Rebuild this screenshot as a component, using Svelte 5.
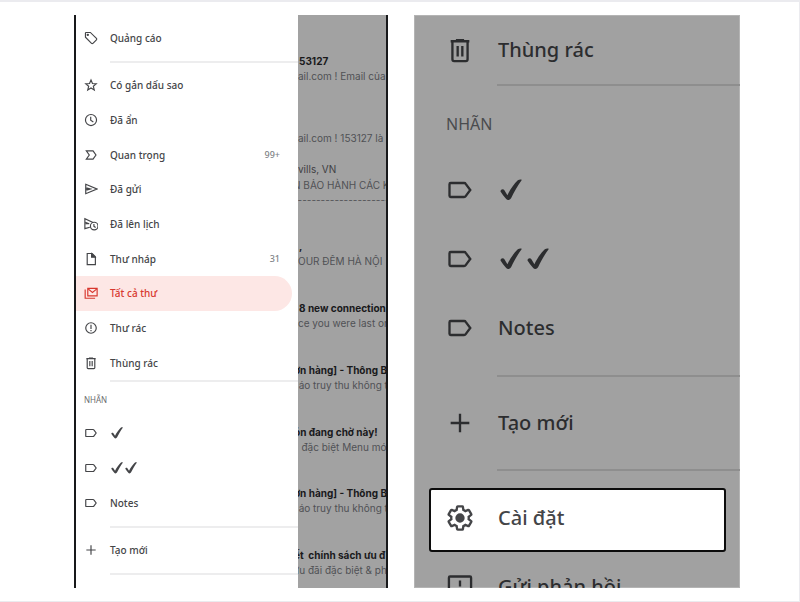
<script lang="ts">
	type Item = { icon: string; name: string; count?: string; active?: boolean; checks?: number };
	type Mail = { sender?: string; subject?: string; snippet?: string; unread?: boolean; cut?: boolean };

	const folders: Item[] = [
		{ icon: 'star', name: 'Có gắn dấu sao' },
		{ icon: 'clock', name: 'Đã ẩn' },
		{ icon: 'important', name: 'Quan trọng', count: '99+' },
		{ icon: 'send', name: 'Đã gửi' },
		{ icon: 'scheduled', name: 'Đã lên lịch' },
		{ icon: 'draft', name: 'Thư nháp', count: '31' },
		{ icon: 'allmail', name: 'Tất cả thư', active: true },
		{ icon: 'spam', name: 'Thư rác' },
		{ icon: 'trash', name: 'Thùng rác' }
	];

	const labels: Item[] = [
		{ icon: 'label', name: 'Một dấu kiểm', checks: 1 },
		{ icon: 'label', name: 'Hai dấu kiểm', checks: 2 },
		{ icon: 'label', name: 'Notes' }
	];

	// "cut" mails slide a few pixels under the drawer
	const mails: Mail[] = [
		{ subject: '53127', snippet: 'ail.com ! Email của', unread: true },
		{ snippet: 'ail.com ! 153127 là' },
		{ sender: 'vills, VN', subject: 'N BẢO HÀNH CÁC K', snippet: '-'.repeat(21), cut: true },
		{ subject: ',', snippet: 'OUR ĐÊM HÀ NỘI', unread: true },
		{ subject: '8 new connection', snippet: 'ce you were last on', unread: true },
		{ subject: 'ơn hàng] - Thông B', snippet: '  áo truy thu không t', unread: true, cut: true },
		{ subject: 'ón đang chờ này!', snippet: '   đặc biệt Menu mó', unread: true, cut: true },
		{ subject: 'ơn hàng] - Thông B', snippet: '  áo truy thu không t', unread: true, cut: true },
		{ subject: 'ết  chính sách ưu đ', snippet: 'ưu đãi đặc biệt & ph', unread: true, cut: true }
	];
</script>

{#snippet icon(name: string)}
	<svg class="icon" viewBox="0 0 24 24" aria-hidden="true">
		{#if name === 'tag'}
			<path d="M2.500 3.500v7.200l10.400 10.400c.7.7 1.700.7 2.400 0l6-6c.7-.7.7-1.700 0-2.400L10.900 2.500H3.500c-.6 0-1 .4-1 1z" />
			<circle class="solid" cx="6.500" cy="6.500" r="1" />
		{:else if name === 'star'}
			<path d="M12 3.500l2.500 6 6.500.5-5 4.200 1.600 6.300-5.600-3.400-5.600 3.400L8 14.200 3 10l6.500-.5z" />
		{:else if name === 'clock'}
			<circle cx="12" cy="12" r="9.500" />
			<path d="M11.500 6.500v6l4.500 3" />
		{:else if name === 'important'}
			<path d="M4 5h11.500l5 7-5 7H4l5-7z" />
		{:else if name === 'send'}
			<path d="M3 4l19 8-19 8z" />
			<path d="M3 12h10M4 10l7 2-7 2" />
		{:else if name === 'scheduled'}
			<path d="M10 17.500L1.500 20V3l14 6.500" />
			<path d="M2 11.500h7M2 9l7 2.500" />
			<circle cx="17.500" cy="15.500" r="6.500" />
			<path d="M17 12v4l3 2" />
		{:else if name === 'draft'}
			<path d="M5.500 2.500h8.500l5.500 5.500v13.500h-14z" />
			<path class="solid" d="M13 3v6h6z" />
		{:else if name === 'allmail'}
			<path d="M6.500 4h16v13h-16z" />
			<path d="M7 5l7.500 6L22 5M2 6v15h17" />
		{:else if name === 'spam'}
			<circle cx="12" cy="12" r="9" />
			<path d="M12 6.500v7M12 15.500v2" />
		{:else if name === 'trash'}
			<path d="M5.500 5v15c0 .8.600 1.500 1.500 1.500h10c.9 0 1.500-.7 1.500-1.500V5" />
			<path d="M4 4.500h16M8.500 3.500h7M10 8.500v9M14 8.500v9" />
		{:else if name === 'label'}
			<path d="M5 6h10.500c.6 0 1.100.2 1.400.7L20.800 12l-3.900 5.300c-.3.500-.8.700-1.400.7H4c-.6 0-1-.4-1-1V7c0-.6.400-1 1-1z" />
		{:else if name === 'plus'}
			<path d="M12 4v16M4 12h16" />
		{:else if name === 'settings'}
			<path d="M19.430 12.980c.04-.32.07-.64.07-.98 0-.34-.03-.66-.07-.98l2.110-1.650c.19-.15.24-.42.12-.64l-2-3.460c-.09-.16-.26-.25-.44-.25-.06 0-.12.01-.17.03l-2.490 1c-.52-.4-1.080-.73-1.690-.98l-.38-2.650C14.460 2.180 14.250 2 14 2h-4c-.25 0-.46.18-.49.42l-.38 2.650c-.61.25-1.170.59-1.690.98l-2.490-1c-.06-.02-.12-.03-.18-.03-.17 0-.34.09-.43.25l-2 3.460c-.13.22-.07.49.12.64l2.110 1.650c-.04.32-.07.65-.07.98 0 .33.03.66.07.98l-2.110 1.650c-.19.15-.24.42-.12.64l2 3.460c.09.16.26.25.44.25.06 0 .12-.01.17-.03l2.490-1c.52.4 1.080.73 1.690.98l.38 2.650c.03.24.24.42.49.42h4c.25 0 .46-.18.49-.42l.38-2.650c.61-.25 1.170-.59 1.690-.98l2.490 1c.06.02.12.03.18.03.17 0 .34-.09.43-.25l2-3.460c.12-.22.07-.49-.12-.64z" />
			<circle class="solid" cx="12" cy="12" r="3" />
		{:else if name === 'feedback'}
			<path d="M2.500 22V4c0-.6.400-1 1-1h17c.6 0 1 .4 1 1v14H6.500z" />
			<path d="M12 6.500v5M12 13.500v2" />
		{/if}
	</svg>
{/snippet}

{#snippet row(item: Item)}
	<a class="row" class:active={item.active} href="#{item.icon}" aria-label={item.name}>
		{@render icon(item.icon)}
		{#if item.checks}
			<span class="checks">
				{#each { length: item.checks } as _}
					<svg class="check" viewBox="0 0 22 22" aria-hidden="true">
						<path d="M.5 12.500C.4 10.500 3.300 9.500 4.400 11.300l3 4.900C10 10.500 14 5 17.800 1.300 19.200.3 22.200.3 21.600 1.200 17.600 6.500 14 13.300 11.200 19c-1.200 2.300-3.800 2.600-5.200.8C4 17.500 2 15 .5 12.500z" />
					</svg>
				{/each}
			</span>
		{:else}
			<span class="name">{item.name}</span>
		{/if}
		{#if item.count}<span class="count">{item.count}</span>{/if}
	</a>
{/snippet}

<main class="frame">
	<section class="phone">
		<nav class="menu">
			{@render row({ icon: 'tag', name: 'Quảng cáo' })}
			<hr />
			<ul class="folders">
				{#each folders as item}
					<li>{@render row(item)}</li>
				{/each}
			</ul>
			<hr />
			<h2>NHÃN</h2>
			<ul class="labels">
				{#each labels as item}
					<li>{@render row(item)}</li>
				{/each}
			</ul>
			<hr />
			{@render row({ icon: 'plus', name: 'Tạo mới' })}
			<hr />
		</nav>
		<div class="mails">
			{#each mails as mail}
				<article class:cut={mail.cut} class:unread={mail.unread}>
					<p class="sender">{mail.sender}</p>
					<p class="subject">{mail.subject}</p>
					<p class="snippet">{mail.snippet}</p>
				</article>
			{/each}
		</div>
	</section>

	<nav class="menu large">
		{@render row({ icon: 'trash', name: 'Thùng rác' })}
		<hr />
		<h2>NHÃN</h2>
		<ul class="labels">
			{#each labels as item}
				<li>{@render row(item)}</li>
			{/each}
		</ul>
		<hr />
		{@render row({ icon: 'plus', name: 'Tạo mới' })}
		<hr />
		<div class="highlight">
			{@render row({ icon: 'settings', name: 'Cài đặt' })}
		</div>
		<div class="last">
			{@render row({ icon: 'feedback', name: 'Gửi phản hồi' })}
		</div>
	</nav>
</main>

<style>
	:global(body) {
		margin: 0;
		background: #fff;
	}
	.frame {
		display: grid;
		grid-template-columns: minmax(0, 314fr) minmax(0, 326fr);
		gap: 26px;
		padding: 13px 59px 13px 74px;
		border: solid #ebebef;
		border-width: 2px 1px 1px 0;
		font-family: 'Noto Sans', 'Open Sans', sans-serif;
	}
	.phone {
		display: grid;
		grid-template-columns: minmax(0, 222fr) minmax(0, 88fr);
		border: solid #18191b;
		border-width: 0 2px;
	}

	/* menu, shared by the drawer and the enlarged view */
	.menu {
		display: flex;
		flex-direction: column;
		padding: 6px 0 8px;
		color: #444548;
		font-size: 10px;
	}
	ul {
		display: grid;
		grid-auto-rows: 1fr;
		margin: 0;
		padding: 0;
		list-style: none;
	}
	li {
		display: grid;
	}
	.row {
		display: flex;
		align-items: center;
		gap: 12px;
		min-height: 34px;
		padding: 0 18px 0 8px;
		box-sizing: border-box;
		color: inherit;
		font-weight: 500;
		line-height: 14px;
		text-decoration: none;
		white-space: nowrap;
	}
	.row.active {
		margin-right: 6px;
		border-radius: 0 18px 18px 0;
		background: #fde7e5;
		color: #d8382f;
	}
	.count {
		margin-left: auto;
		color: #808387;
		font-size: 9px;
	}
	.icon {
		flex: none;
		width: 14px;
		height: 14px;
		fill: none;
		stroke: currentColor;
		stroke-width: 2;
	}
	.solid {
		fill: currentColor;
	}
	.checks {
		display: flex;
		gap: 2px;
		padding-left: 1px;
	}
	.check {
		width: 12px;
		height: 12px;
		fill: currentColor;
	}
	hr {
		width: calc(100% - 34px);
		height: 2px;
		margin: 6px 0 5px 34px;
		border: 0;
		background: #ededee;
	}
	.folders {
		min-height: 312px;
	}
	.folders + hr {
		margin: 0 0 0 34px;
	}
	.labels {
		min-height: 104px;
	}
	h2 {
		margin: 0;
		padding: 12px 0 10px 8px;
		color: #6a6b6e;
		font-size: 8px;
		font-weight: 400;
		line-height: 12px;
	}

	/* inbox behind the drawer */
	.mails {
		display: flex;
		flex-direction: column;
		justify-content: space-between;
		padding: 22px 0 10px;
		overflow: hidden;
		background: #a2a2a2;
		color: #505155;
		font-family: Inter, 'Noto Sans', sans-serif;
		font-size: 10px;
		line-height: 15px;
	}
	.mails p {
		min-height: 15px;
		margin: 0;
		white-space: pre;
	}
	.mails .sender {
		min-height: 17px;
		color: #3f4043;
		line-height: 17px;
	}
	.unread .subject {
		padding-left: 1px;
		color: #19191b;
		font-weight: 700;
	}
	.cut .subject,
	.cut .snippet {
		text-indent: -5px;
	}

	/* enlarged view */
	.large {
		padding: 0;
		overflow: hidden;
		background: #a1a1a1;
		color: #2c2d2f;
		font-size: 20px;
		box-shadow: inset 0 0 0 1px #b4b4b4;
	}
	.large .row {
		gap: 24px;
		min-height: 69px;
		padding: 0 0 0 32px;
		line-height: 28px;
	}
	.large .icon {
		width: 28px;
		height: 28px;
	}
	.large .checks {
		gap: 5px;
		padding-left: 2px;
	}
	.large .check {
		width: 22px;
		height: 22px;
	}
	.large hr {
		width: calc(100% - 83px);
		margin: 12px 0 11px 83px;
		background: #8e8e8e;
	}
	.large > .row:first-child + hr {
		margin: 0 0 0 83px;
	}
	.large h2 {
		padding: 27px 0 20px 32px;
		color: #4a4b4e;
		font-size: 16px;
		line-height: 22px;
	}
	.large .labels {
		min-height: 208px;
	}
	.highlight {
		margin: 6px 14px 0 15px;
		border: 2px solid #0c0c0c;
		border-radius: 3px;
		background: #fff;
		color: #444548;
	}
	.highlight .row {
		min-height: 60px;
		padding: 0 0 4px 15px;
	}
	.last {
		height: 36px;
	}
</style>
